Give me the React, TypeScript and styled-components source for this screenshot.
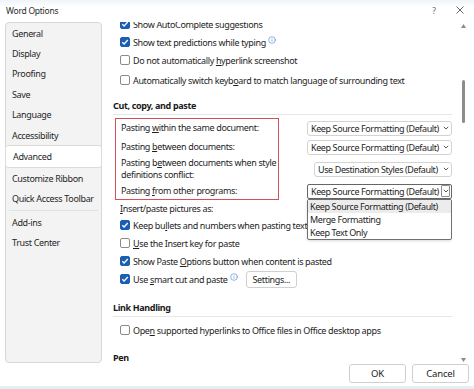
import React from "react";
import styled, { createGlobalStyle } from "styled-components";
import { Info } from "lucide-react";

const GlobalStyle = createGlobalStyle`
	html, body {
		margin: 0;
		padding: 0;
	}
	body {
		background: #e2f0f3;
		font-family: "Noto Sans", "Segoe UI", sans-serif;
		font-size: 9px;
		letter-spacing: -0.35px;
		color: #1e1e1e;
	}
	* {
		box-sizing: border-box;
	}
`;

const Window = styled.div`
	width: 474px;
	height: 386px;
	background: #fff;
	display: flex;
	flex-direction: column;
	overflow: hidden;
`;

const TitleBar = styled.div`
	height: 20px;
	display: flex;
	align-items: center;
	padding: 0 1px 0 6px;
	background: linear-gradient(#edf5f9, #ffffff 7px);
`;

const Title = styled.div`
	flex: 1;
	font-size: 8.5px;
	letter-spacing: -0.25px;
	color: #2b2b2b;
`;

const TitleGlyph = styled.div`
	width: 26px;
	display: flex;
	justify-content: center;
	color: #6a6a6a;
	font-size: 8.5px;
`;

const Body = styled.div`
	height: 343px;
	display: flex;
`;

const Nav = styled.div`
	width: 97px;
	margin: 2px 0 0 5px;
	border: 1px solid #d7d7d7;
	border-radius: 4px;
	background: #f3f3f3;
	display: flex;
	flex-direction: column;
`;

const NavItem = styled.div<{ $active?: boolean }>`
	height: ${({ $active }) => ($active ? "23px" : "20.4px")};
	display: flex;
	align-items: center;
	padding-left: ${({ $active }) => ($active ? "7px" : "6px")};
	margin: ${({ $active }) => ($active ? "0 -1px" : "0")};
	background: ${({ $active }) => ($active ? "#fff" : "transparent")};
	border: ${({ $active }) => ($active ? "1px solid #dcdcdc" : "none")};
	border-radius: 3px;
	color: #262626;
	white-space: nowrap;
`;

const NavDivider = styled.div`
	height: 1px;
	margin: 1px 3px;
	background: #e2e2e2;
`;

const Pane = styled.div`
	flex: 1;
	display: flex;
	margin: 2px 0 0 2px;
`;

const Viewport = styled.div`
	flex: 1;
	overflow: hidden;
	padding-left: 9px;
`;

const Scroller = styled.div`
	margin-top: -7px;
	display: flex;
	flex-direction: column;
`;

const ScrollBar = styled.div`
	width: 22px;
	display: flex;
	flex-direction: column;
	align-items: center;
	padding: 2px 0 1px;
`;

const Arrow = styled.svg`
	width: 5px;
	height: 4px;
	fill: #8a8a8a;
`;

const Thumb = styled.div`
	width: 3px;
	height: 43px;
	margin-top: 52px;
	border-radius: 2px;
	background: #8c8c8c;
`;

const Spacer = styled.div`
	flex: 1;
`;

const CheckRow = styled.div<{ $top?: number }>`
	height: 18px;
	display: flex;
	align-items: center;
	gap: 3px;
	padding-left: 7px;
	margin-top: ${({ $top }) => $top ?? 0}px;
	white-space: nowrap;
`;

const Box = styled.span<{ $checked?: boolean }>`
	width: 10px;
	height: 10px;
	flex: none;
	display: inline-flex;
	align-items: center;
	justify-content: center;
	border-radius: 2px;
	border: 1px solid ${({ $checked }) => ($checked ? "#1a5fb2" : "#8b8b8b")};
	background: ${({ $checked }) => ($checked ? "#1a5fb2" : "#fff")};
`;

const InfoMark = styled(Info)`
	flex: none;
	margin: -4px 0 0 -1px;
	color: #2d74c9;
`;

const SectionHeading = styled.div<{ $top: number }>`
	height: 18px;
	margin-top: ${({ $top }) => $top}px;
	display: flex;
	align-items: center;
	font-weight: 700;
	border-bottom: 1px solid #e6e6e6;
	color: #1a1a1a;
`;

const PasteGrid = styled.div`
	display: grid;
	grid-template-columns: 166px 1fr;
	grid-template-rows: 20px 18px 26px 18px;
	margin-top: 3px;
`;

const RedFrame = styled.div`
	grid-column: 1;
	grid-row: 1 / 5;
	margin-left: 2px;
	border: 1px solid #d1505a;
`;

const PasteLabel = styled.div<{ $row: number }>`
	grid-column: 1;
	grid-row: ${({ $row }) => $row};
	align-self: center;
	padding-left: 8px;
	line-height: 12px;
	white-space: nowrap;
`;

const SelectCell = styled.div<{ $row: number }>`
	grid-column: 2;
	grid-row: ${({ $row }) => $row};
	justify-self: end;
	align-self: center;
	position: relative;
`;

const Select = styled.div<{ $width: number; $open?: boolean }>`
	width: ${({ $width }) => $width}px;
	height: 15px;
	display: flex;
	align-items: center;
	justify-content: space-between;
	padding: 0 1px 0 3px;
	border: 1px solid ${({ $open }) => ($open ? "#666" : "#d3d3d3")};
	border-radius: ${({ $open }) => ($open ? "2px" : "3px")};
	background: #fff;
	white-space: nowrap;
	letter-spacing: -0.4px;
`;

const Caret = styled.span<{ $boxed?: boolean }>`
	width: 9px;
	height: 12px;
	display: flex;
	align-items: center;
	justify-content: center;
	border: 1px solid ${({ $boxed }) => ($boxed ? "#8d8d8d" : "transparent")};
	border-radius: 1px;
`;

const DropList = styled.div`
	position: absolute;
	top: 100%;
	left: 0;
	right: 0;
	z-index: 5;
	border: 1px solid #6f6f6f;
	border-radius: 2px;
	background: #fff;
	box-shadow: 0 1px 3px rgba(0, 0, 0, 0.15);
	letter-spacing: -0.4px;
`;

const DropItem = styled.div<{ $hover?: boolean }>`
	height: 13px;
	display: flex;
	align-items: center;
	padding-left: 2px;
	background: ${({ $hover }) => ($hover ? "#ececec" : "transparent")};
	white-space: nowrap;
`;

const PlainRow = styled.div`
	height: 16px;
	display: flex;
	align-items: center;
	padding-left: 7px;
`;

const SmallButton = styled.button`
	height: 17px;
	margin-left: 5px;
	padding: 0 6px;
	border: 1px solid #d0d0d0;
	border-radius: 3px;
	background: #fff;
	font: inherit;
	letter-spacing: inherit;
	color: inherit;
`;

const Footer = styled.div`
	flex: 1;
	display: flex;
	justify-content: flex-end;
	align-items: flex-start;
	gap: 6px;
	padding: 1px 5px 0 0;
`;

const DialogButton = styled.button`
	width: 57px;
	height: 19px;
	border: 1px solid #cfcfcf;
	border-radius: 3px;
	background: #fff;
	font: inherit;
	font-size: 9.5px;
	letter-spacing: -0.2px;
	color: #222;
`;

const Key = styled.u`
	text-underline-offset: 1px;
`;

function Check({ checked }: { checked?: boolean }) {
	return (
		<Box $checked={checked}>
			{checked && (
				<svg width="8" height="8" viewBox="0 0 8 8">
					<polyline points="1.3,4.2 3.1,6 6.8,2" fill="none" stroke="#fff" strokeWidth="1.3" />
				</svg>
			)}
		</Box>
	);
}

function Chevron() {
	return (
		<svg width="6" height="4" viewBox="0 0 6 4">
			<polyline points="0.8,0.8 3,3 5.2,0.8" fill="none" stroke="#5a5a5a" strokeWidth="1" />
		</svg>
	);
}

const navItems = [
	"General",
	"Display",
	"Proofing",
	"Save",
	"Language",
	"Accessibility",
	"Advanced",
	"Customize Ribbon",
	"Quick Access Toolbar",
];

export default function App() {
	return (
		<>
			<GlobalStyle />
			<Window>
				<TitleBar>
					<Title>Word Options</Title>
					<TitleGlyph>?</TitleGlyph>
					<TitleGlyph>
						<svg width="8" height="8" viewBox="0 0 8 8">
							<path d="M0.5 0.5 L7.5 7.5 M7.5 0.5 L0.5 7.5" stroke="#555" strokeWidth="0.9" />
						</svg>
					</TitleGlyph>
				</TitleBar>

				<Body>
					<Nav>
						{navItems.map((item) => (
							<NavItem key={item} $active={item === "Advanced"}>
								{item}
							</NavItem>
						))}
						<NavDivider />
						<NavItem>Add-ins</NavItem>
						<NavItem>Trust Center</NavItem>
					</Nav>

					<Pane>
						<Viewport>
							<Scroller>
								<CheckRow>
									<Check checked />
									Show AutoComplete suggestions
								</CheckRow>
								<CheckRow>
									<Check checked />
									Show text predictions while typing
									<InfoMark size={8} strokeWidth={1.6} />
								</CheckRow>
								<CheckRow>
									<Check />
									<span>
										Do not automatically <Key>h</Key>yperlink screenshot
									</span>
								</CheckRow>
								<CheckRow $top={2}>
									<Check />
									<span>
										Automatically switch keyb<Key>o</Key>ard to match language of surrounding text
									</span>
								</CheckRow>

								<SectionHeading $top={8}>Cut, copy, and paste</SectionHeading>

								<PasteGrid>
									<RedFrame />
									<PasteLabel $row={1}>
										Pasting <Key>w</Key>ithin the same document:
									</PasteLabel>
									<PasteLabel $row={2}>
										Pasting <Key>b</Key>etween documents:
									</PasteLabel>
									<PasteLabel $row={3}>
										Pasting b<Key>e</Key>tween documents when style
										<br />
										definitions conflict:
									</PasteLabel>
									<PasteLabel $row={4}>
										Pasting <Key>f</Key>rom other programs:
									</PasteLabel>

									<SelectCell $row={1}>
										<Select $width={145}>
											Keep Source Formatting (Default)
											<Caret>
												<Chevron />
											</Caret>
										</Select>
									</SelectCell>
									<SelectCell $row={2}>
										<Select $width={145}>
											Keep Source Formatting (Default)
											<Caret>
												<Chevron />
											</Caret>
										</Select>
									</SelectCell>
									<SelectCell $row={3}>
										<Select $width={138}>
											Use Destination Styles (Default)
											<Caret>
												<Chevron />
											</Caret>
										</Select>
									</SelectCell>
									<SelectCell $row={4}>
										<Select $width={145} $open>
											Keep Source Formatting (Default)
											<Caret $boxed>
												<Chevron />
											</Caret>
										</Select>
										<DropList>
											<DropItem $hover>Keep Source Formatting (Default)</DropItem>
											<DropItem>Merge Formatting</DropItem>
											<DropItem>Keep Text Only</DropItem>
										</DropList>
									</SelectCell>
								</PasteGrid>

								<PlainRow>
									<span>
										<Key>I</Key>nsert/paste pictures as:
									</span>
								</PlainRow>
								<CheckRow>
									<Check checked />
									<span>
										Keep bu<Key>l</Key>lets and numbers when pasting text
									</span>
								</CheckRow>
								<CheckRow>
									<Check />
									<span>
										<Key>U</Key>se the Insert key for paste
									</span>
								</CheckRow>
								<CheckRow>
									<Check checked />
									<span>
										Show Paste <Key>O</Key>ptions button when content is pasted
									</span>
								</CheckRow>
								<CheckRow>
									<Check checked />
									<span>
										Use <Key>s</Key>mart cut and paste
									</span>
									<InfoMark size={8} strokeWidth={1.6} />
									<SmallButton>Settings...</SmallButton>
								</CheckRow>

								<SectionHeading $top={11}>Link Handling</SectionHeading>
								<CheckRow $top={4}>
									<Check />
									<span>
										Ope<Key>n</Key> supported hyperlinks to Office files in Office desktop apps
									</span>
								</CheckRow>

								<SectionHeading $top={10}>Pen</SectionHeading>
							</Scroller>
						</Viewport>

						<ScrollBar>
							<Arrow viewBox="0 0 5 4">
								<polygon points="2.5,0 5,4 0,4" />
							</Arrow>
							<Thumb />
							<Spacer />
							<Arrow viewBox="0 0 5 4">
								<polygon points="0,0 5,0 2.5,4" />
							</Arrow>
						</ScrollBar>
					</Pane>
				</Body>

				<Footer>
					<DialogButton>OK</DialogButton>
					<DialogButton>Cancel</DialogButton>
				</Footer>
			</Window>
		</>
	);
}
